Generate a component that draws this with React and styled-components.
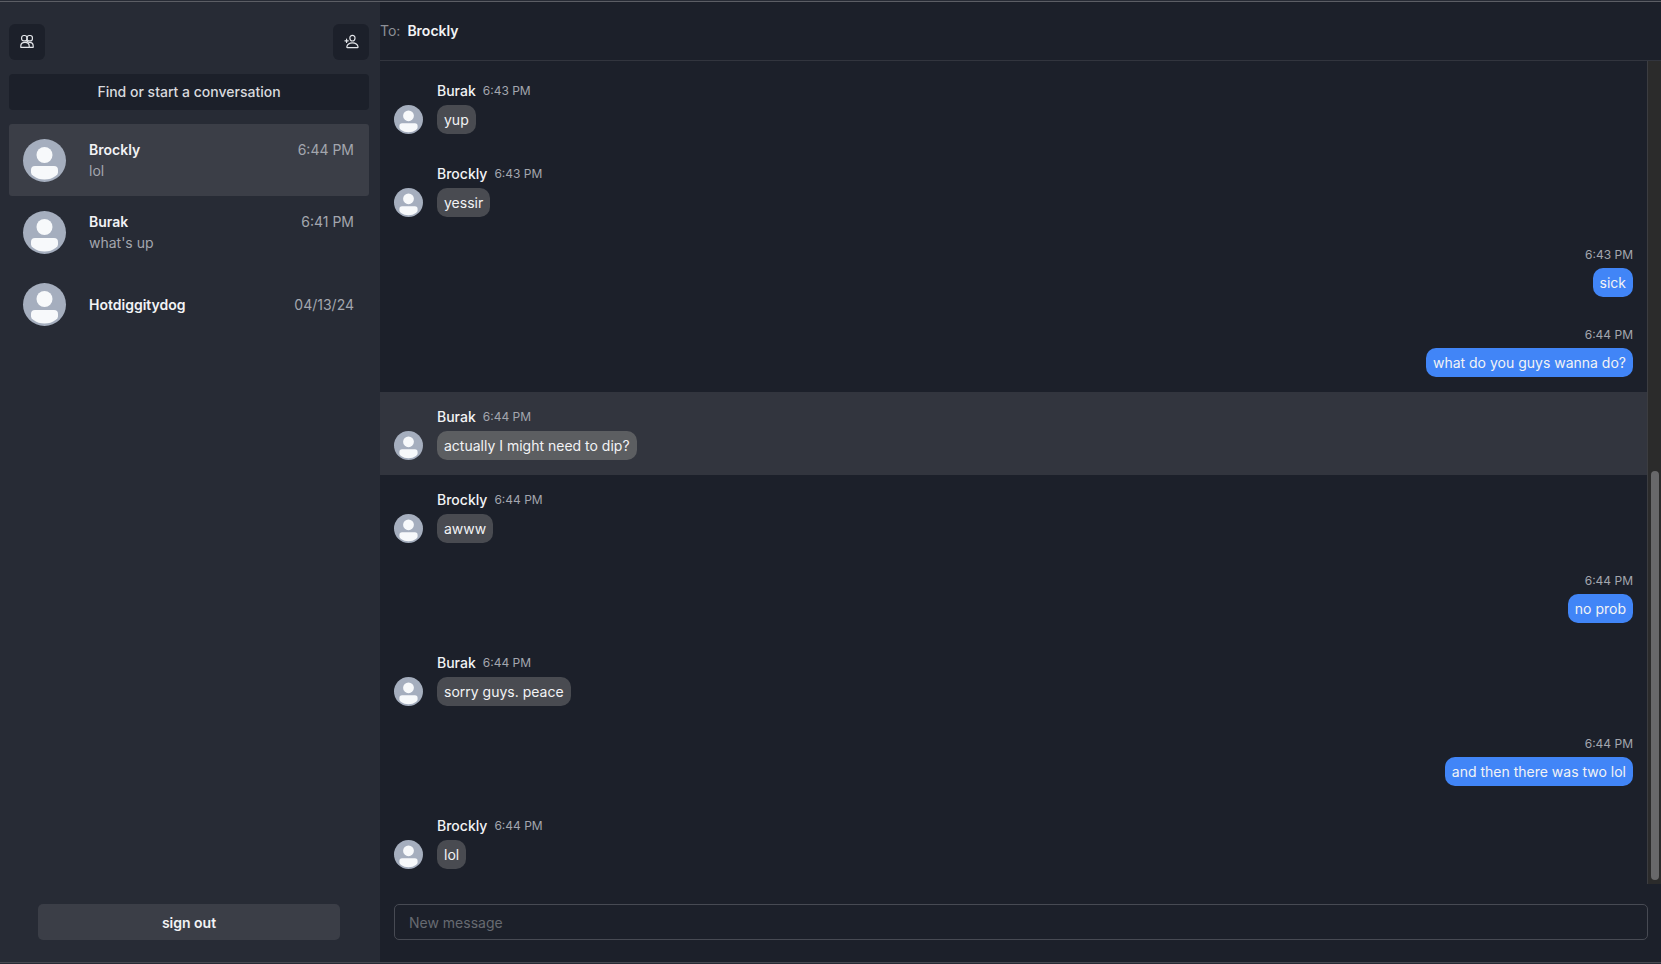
import React from 'react';
import styled, { createGlobalStyle } from 'styled-components';
import { IoPersonAddOutline } from 'react-icons/io5';

const GlobalStyle = createGlobalStyle`
  :root {
    --bg: #1c202a;
    --sidebar: #272b35;
    --raised: #3b3e47;
    --hover: #32353e;
    --line: #32353e;
    --outline: #474a53;
    --text: #f2f3f5;
    --muted: #a3a6ae;
    --blue: #4185f7;
  }
  * {
    box-sizing: border-box;
    margin: 0;
    padding: 0;
  }
  body {
    background: var(--bg);
    color: var(--text);
    font-family: Inter, 'Liberation Sans', sans-serif;
    font-size: 14px;
    line-height: 21px;
  }
  button,
  input {
    font: inherit;
    color: inherit;
    border: none;
  }
`;

const Page = styled.div`
  display: flex;
  height: 100vh;
  padding-top: 1px;
  border-bottom: 1px solid var(--sidebar);
  background: var(--sidebar);
`;

const Frame = styled.div`
  flex: 1;
  display: flex;
  min-width: 0;
  border-top: 1px solid #5c5e65;
  border-bottom: 1px solid #474951;
`;

const Sidebar = styled.aside`
  display: flex;
  flex-direction: column;
  flex: 0 0 380px;
  padding: 22px 11px 22px 9px;
  background: var(--sidebar);
`;

const Toolbar = styled.div`
  display: flex;
  justify-content: space-between;
  margin-bottom: 14px;
`;

const IconButton = styled.button`
  display: flex;
  align-items: center;
  justify-content: center;
  width: 36px;
  height: 36px;
  padding-bottom: 2px;
  border-radius: 6px;
  background: var(--bg);
  color: #e4e6ea;
  .person path {
    stroke-width: 40px;
  }
`;

const SearchButton = styled.button`
  height: 36px;
  margin-bottom: 14px;
  padding-bottom: 2px;
  border-radius: 4px;
  background: var(--bg);
  color: #d9dade;
  font-weight: 500;
`;

const SignOutButton = styled.button`
  height: 36px;
  margin: auto 29px 0;
  border-radius: 5px;
  background: var(--raised);
  font-weight: 600;
`;

const ConversationList = styled.ul`
  list-style: none;
`;

const ConversationButton = styled.button`
  display: flex;
  align-items: center;
  width: 100%;
  height: 72px;
  padding: 14px 15px 14px 14px;
  border-radius: 3px;
  background: ${({ $active }) => ($active ? 'var(--raised)' : 'transparent')};
  text-align: left;
  .summary {
    flex: 1;
    min-width: 0;
    margin-left: 23px;
  }
  .top {
    display: flex;
    justify-content: space-between;
  }
  .name {
    font-weight: 600;
  }
  .time,
  .preview {
    color: var(--muted);
  }
`;

const AvatarStyles = styled.span`
  display: block;
  flex: none;
  width: ${({ $size }) => $size}px;
  height: ${({ $size }) => $size}px;
  border-radius: 50%;
  overflow: hidden;
  background: #a5aebe;
  svg {
    display: block;
    width: 100%;
    height: 100%;
  }
`;

const Chat = styled.main`
  flex: 1;
  display: flex;
  flex-direction: column;
  min-width: 0;
  background: var(--bg);
`;

const ChatHeader = styled.header`
  display: flex;
  gap: 7px;
  height: 59px;
  padding-top: 18px;
  border-bottom: 1px solid var(--line);
  .label {
    color: #8c8f96;
  }
  h1 {
    font-size: 14px;
    font-weight: 600;
  }
`;

const ChatBody = styled.div`
  flex: 1;
  display: flex;
  min-height: 0;
`;

const Messages = styled.ol`
  flex: 1;
  display: flex;
  flex-direction: column;
  justify-content: flex-end;
  min-width: 0;
  overflow: hidden;
  list-style: none;
`;

const MessageRow = styled.li`
  display: flex;
  align-items: flex-end;
  justify-content: ${({ $own }) => ($own ? 'flex-end' : 'flex-start')};
  gap: 14px;
  padding: 14px 14px 15px;
  background: ${({ $hovered }) => ($hovered ? 'var(--hover)' : 'transparent')};
`;

const MessageContent = styled.div`
  display: flex;
  flex-direction: column;
  align-items: ${({ $own }) => ($own ? 'flex-end' : 'flex-start')};
  gap: 4px;
  .meta {
    display: flex;
    align-items: center;
    gap: 7px;
  }
  .author {
    font-weight: 500;
  }
  .time {
    color: var(--muted);
    font-size: 12px;
    line-height: 18px;
  }
`;

const bubbleColor = ({ $own, $hovered }) => {
  if ($own) return 'var(--blue)';
  return $hovered ? '#5c5e61' : '#494b51';
};

const Bubble = styled.p`
  padding: 4px 7px;
  border-radius: 10px;
  background: ${bubbleColor};
`;

const ScrollTrack = styled.div`
  display: flex;
  flex-direction: column;
  justify-content: flex-end;
  width: 14px;
  padding: 0 2px 4px 3px;
  border-left: 1px solid #3c3d41;
  background: #2b2b2b;
`;

const ScrollThumb = styled.div`
  height: 50%;
  border-radius: 4px;
  background: #68686a;
`;

const Composer = styled.form`
  padding: 20px 13px 22px 14px;
  input {
    display: block;
    width: 100%;
    height: 36px;
    padding: 0 14px;
    border: 1px solid var(--outline);
    border-radius: 5px;
    background: transparent;
    outline: none;
  }
  input::placeholder {
    color: #676a71;
    opacity: 1;
  }
`;

const conversations = [
  { name: 'Brockly', time: '6:44 PM', preview: 'lol', active: true },
  { name: 'Burak', time: '6:41 PM', preview: "what's up" },
  { name: 'Hotdiggitydog', time: '04/13/24' },
];

const messages = [
  { id: 1, author: 'Burak', time: '6:43 PM', text: 'yup' },
  { id: 2, author: 'Brockly', time: '6:43 PM', text: 'yessir' },
  { id: 3, own: true, time: '6:43 PM', text: 'sick' },
  { id: 4, own: true, time: '6:44 PM', text: 'what do you guys wanna do?' },
  {
    id: 5,
    author: 'Burak',
    time: '6:44 PM',
    text: 'actually I might need to dip?',
    hovered: true,
  },
  { id: 6, author: 'Brockly', time: '6:44 PM', text: 'awww' },
  { id: 7, own: true, time: '6:44 PM', text: 'no prob' },
  { id: 8, author: 'Burak', time: '6:44 PM', text: 'sorry guys. peace' },
  { id: 9, own: true, time: '6:44 PM', text: 'and then there was two lol' },
  { id: 10, author: 'Brockly', time: '6:44 PM', text: 'lol' },
];

function Avatar({ size }) {
  return (
    <AvatarStyles $size={size}>
      <svg viewBox="0 0 43 43" fill="#f7f9fb" aria-hidden="true">
        <circle cx="21.5" cy="16" r="8" />
        <path d="M12 27h19q4 0 4 4v2.500q0 2-2.500 3.500Q28 40.500 21.500 40.500T10.500 37Q8 35.500 8 33.500V31q0-4 4-4z" />
      </svg>
    </AvatarStyles>
  );
}

function FriendsIcon() {
  return (
    <svg
      width="14"
      height="14"
      viewBox="0 0 14 14"
      fill="none"
      stroke="currentColor"
      strokeWidth="1.2"
      strokeLinejoin="round"
      aria-hidden="true"
    >
      <rect x="1.600" y="1.500" width="5.400" height="5.400" rx="2.200" />
      <rect x="7" y="1.500" width="5.400" height="5.400" rx="2.200" />
      <path d="M0.800 13.300v-1.300C0.800 9.900 2.600 8.400 5 8.400s4.200 1.500 4.200 3.600v1.300z" />
      <path d="M6 6.600C8.600 7.400 7.600 8.400 9.400 8.400c2.200 0 3.800 1.500 3.800 3.600v1.300H9.200" />
    </svg>
  );
}

function Conversation({ name, time, preview, active }) {
  return (
    <li>
      <ConversationButton type="button" $active={active}>
        <Avatar size={43} />
        <div className="summary">
          <div className="top">
            <span className="name">{name}</span>
            <span className="time">{time}</span>
          </div>
          {preview && <div className="preview">{preview}</div>}
        </div>
      </ConversationButton>
    </li>
  );
}

function Message({ author, time, text, own, hovered }) {
  return (
    <MessageRow $own={own} $hovered={hovered}>
      {!own && <Avatar size={29} />}
      <MessageContent $own={own}>
        <div className="meta">
          {!own && <span className="author">{author}</span>}
          <span className="time">{time}</span>
        </div>
        <Bubble $own={own} $hovered={hovered}>
          {text}
        </Bubble>
      </MessageContent>
    </MessageRow>
  );
}

export default function App() {
  return (
    <>
      <GlobalStyle />
      <Page>
        <Frame>
          <Sidebar>
            <Toolbar>
              <IconButton type="button" aria-label="Friends">
                <FriendsIcon />
              </IconButton>
              <IconButton type="button" aria-label="Add friend">
                <IoPersonAddOutline className="person" size={15} />
              </IconButton>
            </Toolbar>
            <SearchButton type="button">Find or start a conversation</SearchButton>
            <ConversationList>
              {conversations.map((conversation) => (
                <Conversation key={conversation.name} {...conversation} />
              ))}
            </ConversationList>
            <SignOutButton type="button">sign out</SignOutButton>
          </Sidebar>
          <Chat>
            <ChatHeader>
              <span className="label">To:</span>
              <h1>Brockly</h1>
            </ChatHeader>
            <ChatBody>
              <Messages>
                {messages.map(({ id, ...message }) => (
                  <Message key={id} {...message} />
                ))}
              </Messages>
              <ScrollTrack>
                <ScrollThumb />
              </ScrollTrack>
            </ChatBody>
            <Composer onSubmit={(e) => e.preventDefault()}>
              <input type="text" aria-label="New message" placeholder="New message" />
            </Composer>
          </Chat>
        </Frame>
      </Page>
    </>
  );
}
